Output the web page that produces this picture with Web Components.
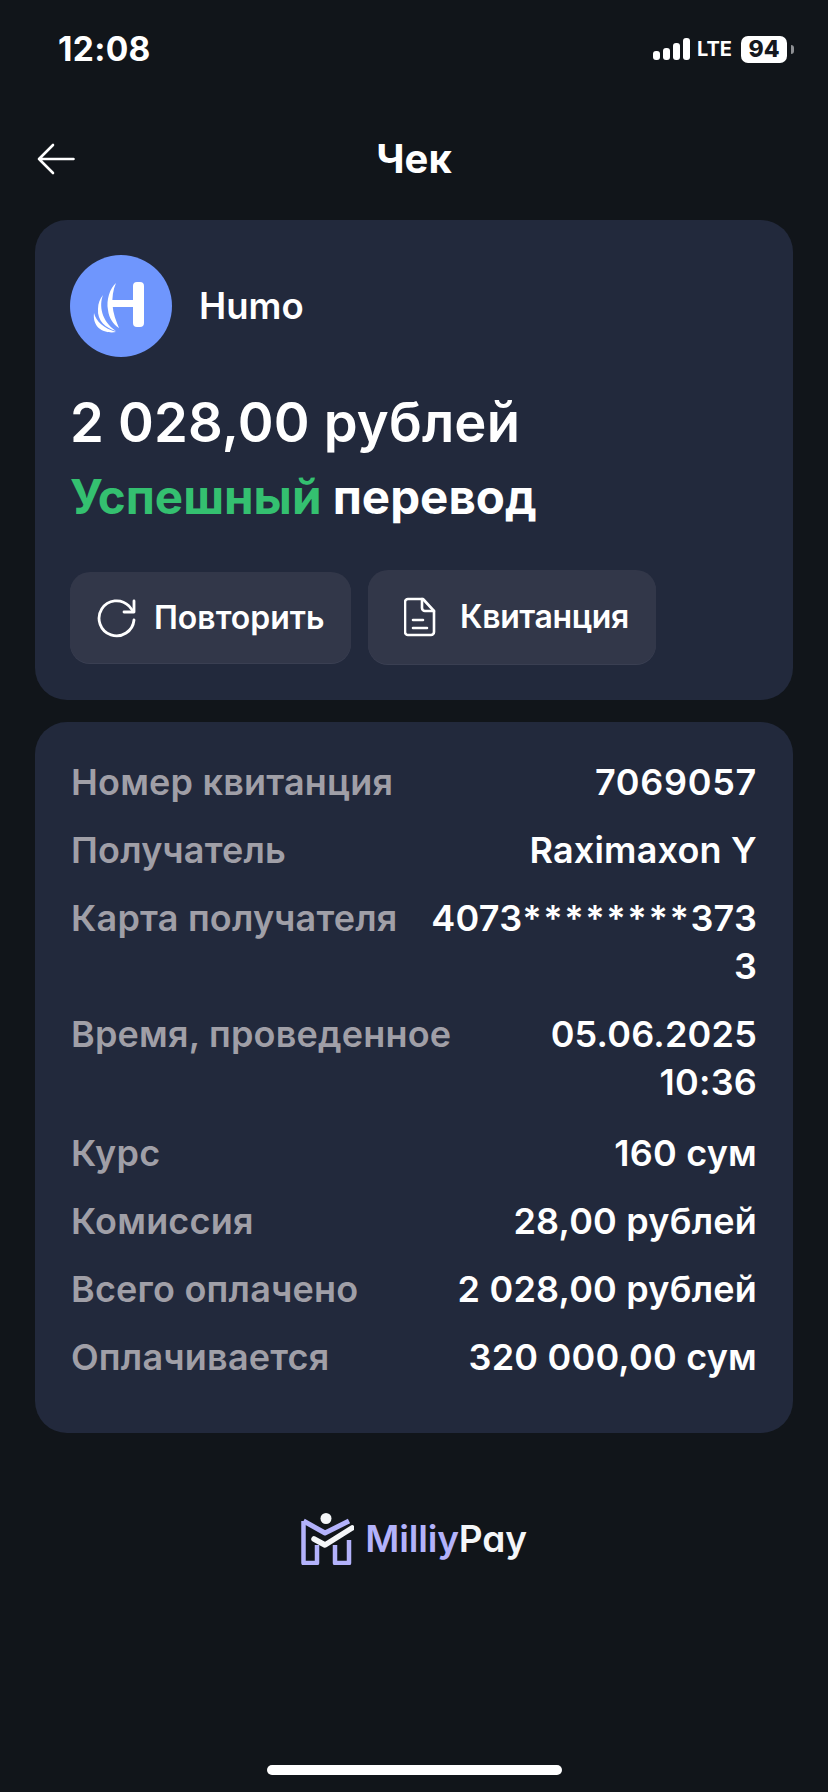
<!DOCTYPE html>
<html>
<head>
<meta charset="utf-8">
<style>
  html, body { margin: 0; background: #11151a; }
  body { font-family: 'Inter', 'Noto Sans', sans-serif; color: #fff; width: 828px; height: 1792px; overflow: hidden; }
</style>
</head>
<body>
<receipt-screen></receipt-screen>

<script>
// status bar on top of the app
class StatusBar extends HTMLElement {
  constructor() {
    super();
    this.attachShadow({mode: 'open'});
    this.shadowRoot.innerHTML = `
      <style>
        :host { display: flex; align-items: center; justify-content: space-between; height: 48px; padding: 25px 34px 0 58px; box-sizing: content-box; }
        .time { font: 700 33.5px/48px 'Inter', sans-serif; letter-spacing: .3px; }
        .right { display: flex; align-items: center; }
        .lte { font: 700 20px/24px 'Inter', sans-serif; margin: 0 9px 0 7px; }
        .batt { display: block; width: 46px; height: 27px; border-radius: 7px; background: #fff; color: #15181e; font: 800 23px/27px 'Inter', sans-serif; text-align: center; }
        .nub { width: 3px; height: 9px; background: #8d8f93; border-radius: 0 3px 3px 0; margin-left: 4px; }
      </style>
      <div class="time">12:08</div>
      <div class="right">
        <svg width="37" height="24" viewBox="0 0 37 24" fill="#fff">
          <rect x="0" y="14" width="7" height="9" rx="3"/>
          <rect x="10" y="11" width="7" height="12" rx="3"/>
          <rect x="20" y="6" width="7" height="17" rx="3"/>
          <rect x="30" y="1" width="7" height="22" rx="3"/>
        </svg>
        <div class="lte">LTE</div>
        <div class="batt">94</div>
        <div class="nub"></div>
      </div>`;
  }
}

// title row with back arrow
class TopNav extends HTMLElement {
  constructor() {
    super();
    this.attachShadow({mode: 'open'});
    this.shadowRoot.innerHTML = `
      <style>
        :host { display: grid; grid-template-columns: 1fr auto 1fr; align-items: center; height: 60px; margin-top: 56px; padding: 0 35px; }
        svg { display: block; margin-left: 2px; }
        h1 { margin: 0; font: 700 40px/60px 'Inter', sans-serif; }
      </style>
      <svg width="38" height="32" viewBox="0 0 38 32" fill="none" stroke="#fff" stroke-width="2.6" stroke-linecap="round" stroke-linejoin="round">
        <path d="M36.5 16H2M16 2 2 16l14 14"/>
      </svg>
      <h1><slot></slot></h1>`;
  }
}

// rounded panel, both cards use it
class DarkCard extends HTMLElement {
  constructor() {
    super();
    this.attachShadow({mode: 'open'});
    this.shadowRoot.innerHTML = `
      <style>
        :host { display: block; background: #22293c; border-radius: 32px; margin: 0 35px; box-sizing: border-box; }
      </style>
      <slot></slot>`;
  }
}

class ActionButton extends HTMLElement {
  constructor() {
    super();
    this.attachShadow({mode: 'open'});
    this.shadowRoot.innerHTML = `
      <style>
        :host { display: flex; align-items: center; box-sizing: border-box; background: #323749; border-radius: 20px; box-shadow: 0 1px 0 #3a3f52; font: 600 32px/40px 'Inter', sans-serif; color: #fff; white-space: nowrap; }
        ::slotted(svg) { display: block; flex: none; }
      </style>
      <slot name="icon"></slot>
      <slot></slot>`;
  }
}

class InfoRow extends HTMLElement {
  constructor() {
    super();
    this.attachShadow({mode: 'open'});
    this.shadowRoot.innerHTML = `
      <style>
        :host { display: flex; justify-content: space-between; gap: 20px; font: 600 36px/48px 'Inter', sans-serif; letter-spacing: .2px; }
        .label { color: #a09fa7; white-space: nowrap; }
        .value { color: #fff; text-align: right; overflow-wrap: anywhere; min-width: 0; }
      </style>
      <div class="label"><slot name="label"></slot></div>
      <div class="value"><slot></slot></div>`;
  }
}

class MilliyLogo extends HTMLElement {
  constructor() {
    super();
    this.attachShadow({mode: 'open'});
    this.shadowRoot.innerHTML = `
      <style>
        :host { display: flex; justify-content: center; align-items: center; gap: 11px; font: 600 37px/50px 'Inter', sans-serif; letter-spacing: -.2px; font-feature-settings: 'cv11'; }
        .a { color: #b3b2fb; }
        .b { color: #f4f6f8; }
      </style>
      <svg width="53" height="52" viewBox="0 0 53 52" fill="none">
        <circle cx="25" cy="5.500" r="5.500" fill="#f4f6f8"/>
        <path d="M2.500 8V50H16V32M34 32V50H48V27" stroke="#b3b2fb" stroke-width="4.500" stroke-linejoin="round"/>
        <path d="M2.500 8 24 20 48 8" stroke="#b3b2fb" stroke-width="5" stroke-linejoin="round"/>
        <path d="M13 26 24 32 51 15" stroke="#f4f6f8" stroke-width="5.500" stroke-linecap="round" stroke-linejoin="round"/>
      </svg>
      <div><span class="a">Milliy</span><span class="b">Pay</span></div>`;
  }
}

class ReceiptScreen extends HTMLElement {
  constructor() {
    super();
    this.attachShadow({mode: 'open'});
    this.shadowRoot.innerHTML = `
      <style>
        :host { display: block; position: relative; height: 1792px; }
        .head { padding: 35px 35px 36px; }
        .brand { display: flex; align-items: center; gap: 27px; font: 600 36.500px/44px 'Inter', sans-serif; }
        .amount { font: 600 54.300px/60px 'Inter', sans-serif; margin-top: 35px; letter-spacing: .2px; }
        .status { font: 700 47.500px/56px 'Inter', sans-serif; margin-top: 17px; }
        .status b { color: #34c070; font-weight: 700; }
        .actions { display: flex; gap: 17px; margin-top: 45px; align-items: flex-start; }
        .list { display: flex; flex-direction: column; gap: 20px; padding: 36px 36px 52px; }
        .home { position: absolute; left: 267px; top: 1765px; width: 295px; height: 10px; border-radius: 5px; background: #fff; }
        .stars { letter-spacing: 1.600px; }
        milliy-logo { margin-top: 80px; }
        dark-card + dark-card { margin-top: 22px; }
      </style>
      <status-bar></status-bar>
      <top-nav>Чек</top-nav>
      <dark-card style="margin-top:31px">
        <div class="head">
          <div class="brand">
            <svg width="102" height="102" viewBox="0 0 102 102">
              <circle cx="51" cy="51" r="51" fill="#6f96fd"/>
              <path d="M63 31a4 4 0 0 1 4-4h3a4 4 0 0 1 4 4v37a4 4 0 0 1-4 4h-3a4 4 0 0 1-4-4V52H42V45h21Z" fill="#fff"/>
              <path d="M46 28C40 33 36 45 38 55 39 63 43 69 49 73 46 66 43 58 42.500 50 42 42 43 35 46 28Z" fill="#fff"/>
              <path d="M33 40C29 50 31 66 46 76 36 73 27 66 28 54 28 48 30 44 33 40Z" fill="#fff"/>
              <path d="M24 58C26 66 33 73 46 77 36 79 22 74 24 58Z" fill="#fff"/>
            </svg>
            <span>Humo</span>
          </div>
          <div class="amount">2 028,00 рублей</div>
          <div class="status"><b>Успешный</b> перевод</div>
          <div class="actions">
            <action-button style="width:281px;height:91px;padding-left:27px;gap:17px;margin-top:2px">
              <svg slot="icon" width="40" height="40" viewBox="0 0 40 40" fill="none" stroke="#fff" stroke-width="2.800" stroke-linecap="round" stroke-linejoin="round">
                <path d="M37 22A17.500 17.500 0 1 1 32 8l4 5"/>
                <path d="M37 3v11H27"/>
              </svg>
              Повторить
            </action-button>
            <action-button style="width:288px;height:94px;padding-left:36px;gap:24px;letter-spacing:-.35px">
              <svg slot="icon" width="32" height="40" viewBox="0 0 32 40" fill="none" stroke="#fff" stroke-width="2.600" stroke-linecap="round" stroke-linejoin="round">
                <path d="M4 2h15l11 12v21a3 3 0 0 1-3 3H4a3 3 0 0 1-3-3V5a3 3 0 0 1 3-3Z"/>
                <path d="M18 2v9a3 3 0 0 0 3 3h9M9 23h10M9 31h14"/>
              </svg>
              Квитанция
            </action-button>
          </div>
        </div>
      </dark-card>
      <dark-card>
        <div class="list">
          <info-row><span slot="label">Номер квитанция</span><span style="letter-spacing:.7px">7069057</span></info-row>
          <info-row><span slot="label">Получатель</span>Raximaxon Y</info-row>
          <info-row><span slot="label">Карта получателя</span><span style="display:block;width:338px">4073<span class="stars">********</span>3733</span></info-row>
          <info-row style="margin-bottom:3px"><span slot="label">Время, проведенное</span><span style="display:block;width:210px">05.06.2025 10:36</span></info-row>
          <info-row><span slot="label">Курс</span>160 сум</info-row>
          <info-row><span slot="label">Комиссия</span>28,00 рублей</info-row>
          <info-row><span slot="label">Всего оплачено</span>2 028,00 рублей</info-row>
          <info-row><span slot="label">Оплачивается</span>320 000,00 сум</info-row>
        </div>
      </dark-card>
      <milliy-logo></milliy-logo>
      <div class="home"></div>`;
  }
}

customElements.define('status-bar', StatusBar);
customElements.define('top-nav', TopNav);
customElements.define('dark-card', DarkCard);
customElements.define('action-button', ActionButton);
customElements.define('info-row', InfoRow);
customElements.define('milliy-logo', MilliyLogo);
customElements.define('receipt-screen', ReceiptScreen);
</script>
</body>
</html>
